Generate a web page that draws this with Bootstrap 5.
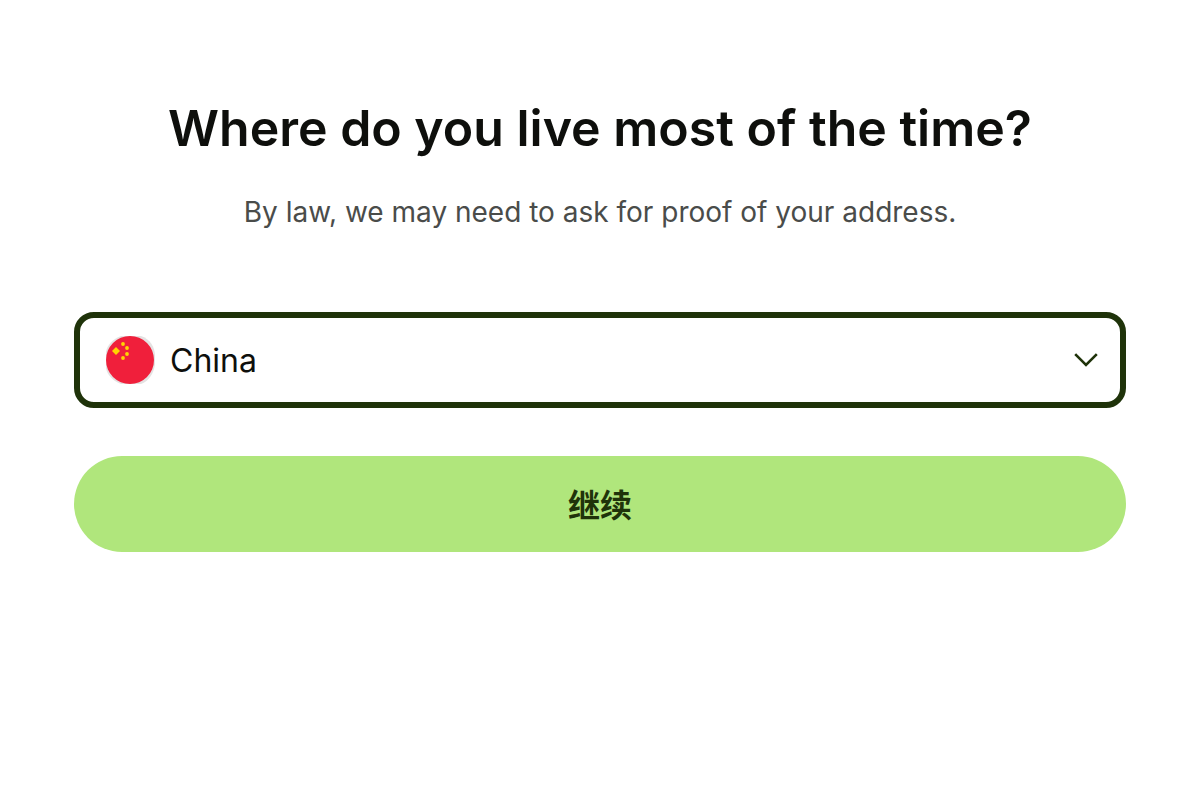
<!DOCTYPE html>
<html lang="en">
<head>
<meta charset="utf-8">
<meta name="viewport" content="width=device-width, initial-scale=1">
<title>Country of residence</title>
<link href="https://cdn.jsdelivr.net/npm/bootstrap@5.3.0/dist/css/bootstrap.min.css" rel="stylesheet">
<style>
body { font-family: Inter, "Noto Sans CJK SC", sans-serif; color: #0e0f0c; background: #fff; }
.page { padding: 96px 74px 48px; }
.title { font-size: 50px; line-height: 64px; font-weight: 600; }
.intro { font-size: 28px; line-height: 44px; color: #4a4c4a; margin-top: 30px; margin-bottom: 78px; }
.country { display: grid; align-items: center; }
.country > * { grid-area: 1 / 1; }
.country .flag { margin-left: 31px; z-index: 1; pointer-events: none; }
.country .form-select {
  height: 96px; padding: 2px 80px 0 90px; border: 6px solid #1f330a; border-radius: 20px;
  font-size: 32px; line-height: 48px; color: #0e0f0c; background-color: #fff;
  background-image: url("data:image/svg+xml,%3csvg xmlns='http://www.w3.org/2000/svg' viewBox='0 0 24 14'%3e%3cpath d='M1.2 1.2 12 12 22.8 1.2' fill='none' stroke='%231f330a' stroke-width='2.6'/%3e%3c/svg%3e");
  background-size: 24px 14px; background-position: right 22px center;
}
.country .form-select:focus { box-shadow: none; }
.continue { height: 96px; margin-top: 48px; padding: 8px 12px 4px; background: #b0e67c; color: #1f330a; font-size: 32px; line-height: 48px; font-weight: 700; border: 0; }
.continue:hover { background: #9fdb66; color: #1f330a; }
</style>
</head>
<body>
<main class="page container-fluid">
  <h1 class="title text-center mb-0">Where do you live most of the time?</h1>
  <p class="intro text-center">By law, we may need to ask for proof of your address.</p>
  <form>
    <div class="country">
      <svg class="flag" width="50" height="50" viewBox="0 0 50 50" aria-hidden="true">
        <path d="M16 1h20c9 3 14 11 14 20v8c-1 9-6 17-14 20H16C8 46 2 40 1 33V17C2 10 8 4 16 1z" fill="#e4e2e2"/>
        <circle cx="25" cy="25" r="24" fill="#f01f3b"/>
        <g fill="#ffd400"><path d="m11 12 4 4-4 4-4-4z"/><circle cx="18" cy="9" r="1.900"/><circle cx="22" cy="13" r="1.900"/><circle cx="22" cy="19" r="1.900"/><circle cx="18" cy="23" r="1.900"/></g>
      </svg>
      <select class="form-select" aria-label="Country"><option>China</option></select>
    </div>
    <button type="button" class="continue btn rounded-pill w-100">继续</button>
  </form>
</main>
<script src="https://cdn.jsdelivr.net/npm/bootstrap@5.3.0/dist/js/bootstrap.bundle.min.js"></script>
</body>
</html>
